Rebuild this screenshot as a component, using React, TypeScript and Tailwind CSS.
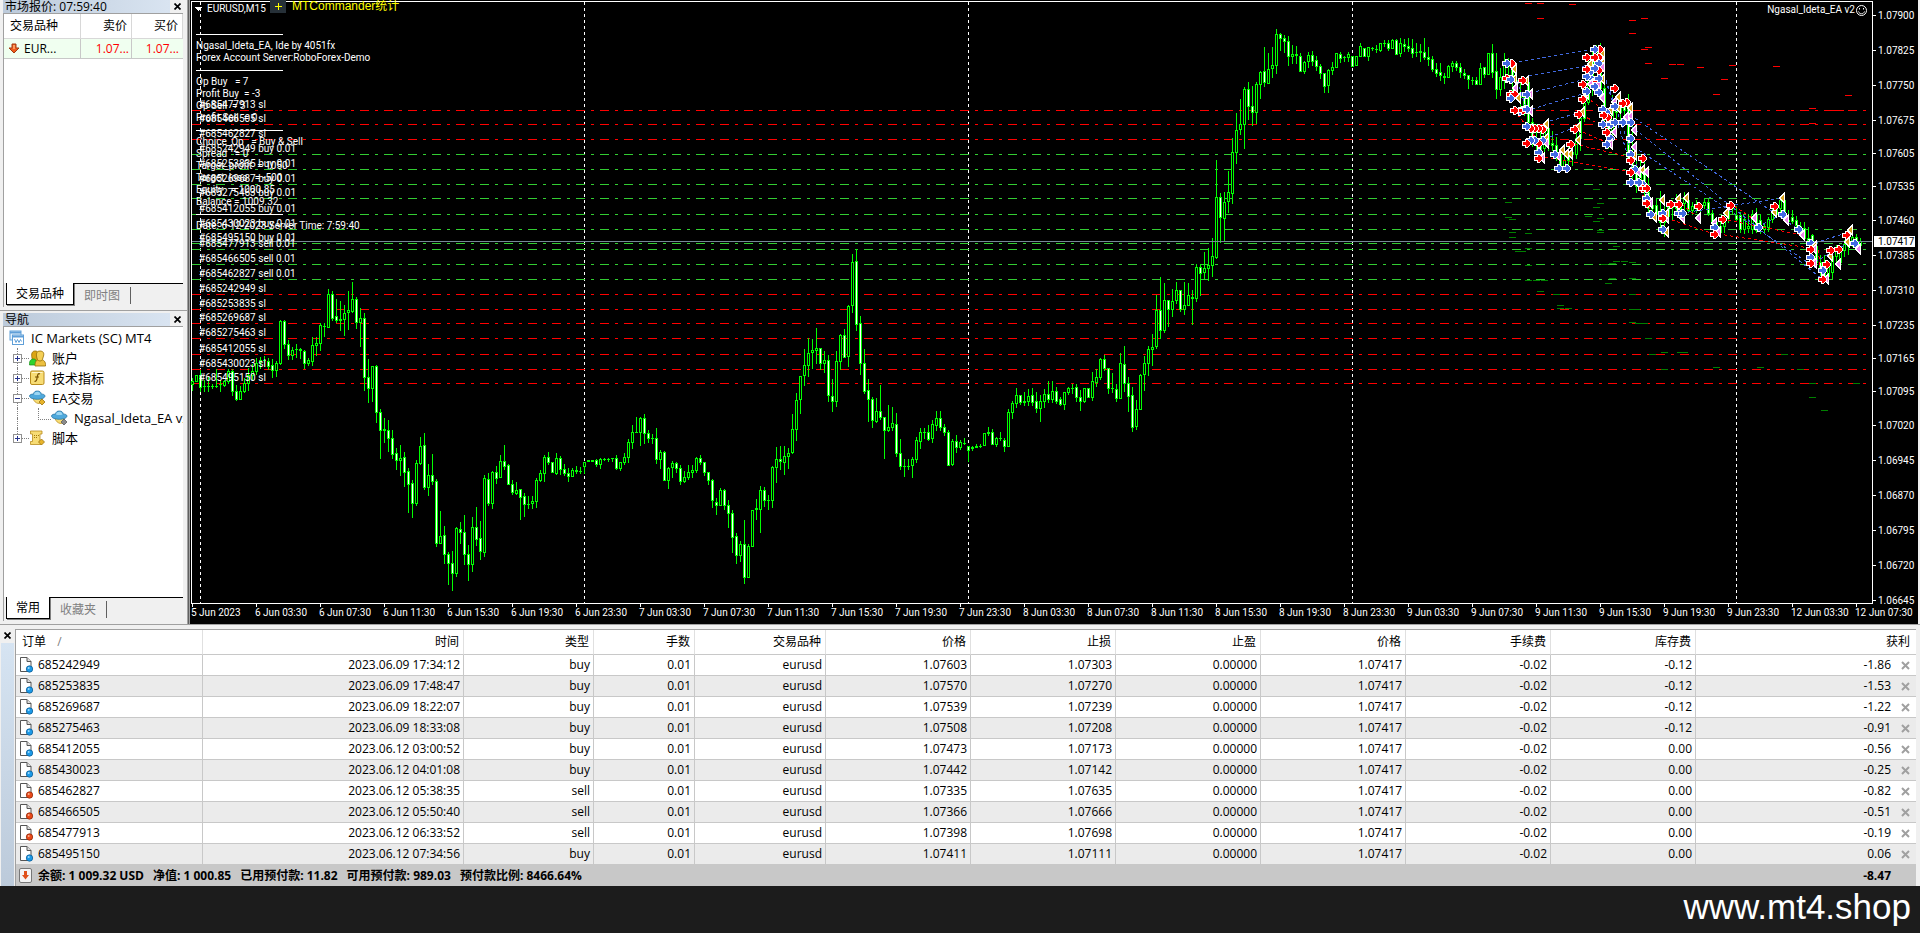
import type { ReactNode } from 'react';
import clsx from 'clsx';

// [open, high, low, close] as chart y positions, one candle every four pixels
type Candle = [number, number, number, number];

const CANDLES: Candle[] = [
  [384,378,390,381],[381,375,381,375],[375,370,391,387],[386,380,391,386],[386,377,391,386],[386,384,388,386],[386,369,387,386],[384,380,391,384],
  [385,380,386,381],[381,369,383,371],[371,369,395,391],[391,385,400,399],[399,386,399,391],[391,378,392,383],[383,368,390,375],[375,364,379,371],
  [371,358,374,363],[362,357,368,360],[360,356,366,360],[361,358,369,366],[365,359,377,370],[370,361,376,363],[363,320,364,321],[321,320,348,344],
  [344,340,359,355],[355,347,359,350],[349,344,357,349],[349,348,358,350],[351,350,368,363],[363,358,365,360],[361,337,365,345],[345,337,355,343],
  [343,323,350,325],[326,323,336,326],[327,289,327,294],[294,291,320,318],[316,299,322,320],[320,301,330,319],[319,305,335,313],[312,291,329,310],
  [311,282,312,299],[299,297,328,322],[322,308,346,318],[318,313,390,377],[377,359,402,388],[388,366,401,366],[366,365,422,412],[412,409,458,430],
  [429,418,442,430],[430,420,451,438],[438,430,458,454],[453,448,469,460],[460,445,475,458],[457,452,486,472],[471,468,512,484],[483,480,517,503],
  [503,460,505,463],[463,437,464,446],[445,433,489,487],[487,464,495,475],[475,454,484,481],[481,479,546,543],[543,511,543,536],[535,526,563,554],
  [554,552,584,563],[563,551,590,573],[573,527,576,528],[529,522,543,532],[532,515,564,554],[554,545,580,564],[564,517,571,527],[527,507,545,539],
  [538,521,559,551],[552,475,556,478],[479,473,505,503],[503,471,508,472],[472,466,483,478],[477,455,477,461],[461,445,469,466],[465,464,484,484],
  [484,480,494,492],[493,482,494,490],[489,489,519,497],[496,493,516,504],[504,496,508,504],[503,496,508,501],[501,478,507,480],[480,470,481,473],
  [473,455,481,457],[457,452,464,462],[462,462,472,472],[473,453,474,458],[458,456,474,469],[469,464,475,473],[473,468,481,476],[476,468,476,470],
  [471,466,473,470],[471,467,473,471],[466,462,473,462],[461,460,461,460],[460,460,461,461],[460,459,466,464],[464,458,468,459],[459,458,460,459],
  [459,458,461,459],[458,458,461,458],[458,455,469,468],[468,462,470,462],[462,453,464,457],[457,439,462,442],[442,425,448,432],[432,417,432,432],
  [432,417,445,418],[418,414,443,433],[433,430,442,438],[438,434,443,438],[438,428,463,459],[459,450,468,452],[452,451,480,480],[480,467,488,468],
  [467,461,477,463],[463,462,472,468],[468,465,484,481],[481,471,482,477],[477,465,479,472],[472,465,477,470],[470,457,472,458],[458,455,464,462],
  [462,462,475,472],[472,472,484,480],[480,479,507,500],[502,498,514,505],[505,488,505,490],[490,489,509,505],[505,500,527,513],[513,510,552,537],
  [536,533,563,555],[555,541,561,544],[544,520,583,577],[577,544,577,546],[546,510,546,510],[509,499,519,508],[509,486,532,490],[490,487,506,500],
  [500,495,509,500],[500,466,507,467],[467,447,482,459],[459,446,469,461],[462,446,474,456],[456,448,468,453],[452,414,453,429],[429,393,440,400],
  [399,376,413,376],[375,349,385,365],[365,338,376,353],[352,339,368,350],[350,328,363,348],[348,348,369,363],[363,351,372,360],[360,355,401,395],
  [396,379,411,401],[401,351,406,361],[361,334,369,335],[335,329,357,357],[356,305,366,306],[305,254,312,262],[261,249,330,324],[323,316,374,363],
  [363,349,393,391],[390,379,421,399],[399,397,427,420],[421,398,422,411],[411,385,419,417],[417,417,458,430],[430,405,431,427],[427,407,430,423],
  [424,413,456,453],[453,439,469,466],[466,459,476,466],[466,459,469,466],[465,457,477,459],[459,437,462,440],[441,428,448,432],[432,428,438,432],
  [432,425,440,439],[438,420,442,424],[425,411,430,418],[418,411,430,427],[427,424,435,432],[432,430,465,465],[464,439,465,441],[441,435,452,447],
  [447,440,449,442],[443,438,444,443],[446,446,461,450],[448,446,450,447],[447,444,447,446],[446,444,447,446],[445,433,445,433],[433,427,435,432],
  [432,429,444,444],[444,437,446,438],[438,432,440,438],[440,438,451,446],[446,409,446,412],[412,401,418,403],[403,388,407,395],[395,395,404,402],
  [402,392,405,401],[401,389,405,396],[395,388,405,402],[401,392,412,408],[408,395,421,401],[401,389,407,394],[394,381,402,399],[399,381,402,391],
  [391,387,403,401],[399,397,405,404],[404,392,409,392],[392,387,394,388],[388,384,393,388],[387,384,401,397],[397,390,410,401],[401,388,402,388],
  [388,388,397,397],[397,372,400,381],[382,369,386,377],[377,358,379,359],[359,355,370,368],[368,368,393,388],[388,373,392,388],[389,384,401,398],
  [398,353,398,363],[364,346,391,383],[383,377,411,396],[395,387,431,427],[426,400,429,409],[409,374,409,375],[374,356,390,363],[363,346,375,349],
  [349,334,365,347],[346,295,348,310],[310,277,338,330],[330,283,332,300],[300,300,326,309],[309,289,316,301],[300,282,303,290],[290,290,311,309],
  [309,282,314,305],[305,283,305,295],[297,290,324,298],[298,264,301,267],[267,264,295,273],[272,252,278,268],[268,248,280,265],[265,238,276,256],
  [257,160,258,197],[197,193,242,217],[218,192,241,202],[201,171,212,192],[193,138,203,152],[152,113,163,130],[129,99,134,124],[124,87,148,89],
  [89,82,119,106],[106,86,125,112],[112,82,123,84],[84,71,98,72],[71,47,86,82],[83,53,83,69],[68,47,77,65],[65,29,73,34],
  [34,33,50,38],[38,35,52,41],[41,36,65,56],[56,45,63,54],[54,46,63,55],[56,53,71,71],[71,61,73,62],[61,52,67,55],
  [55,51,65,61],[60,56,70,66],[66,64,78,73],[73,73,92,86],[85,69,92,70],[70,62,74,67],[67,53,67,53],[54,52,62,58],
  [57,56,61,57],[57,52,61,54],[56,56,66,66],[65,56,65,56],[56,43,56,46],[48,48,56,56],[56,47,60,47],[48,47,50,48],
  [49,45,52,49],[50,43,51,43],[43,40,46,43],[43,40,50,48],[48,39,48,40],[40,39,54,54],[53,38,56,43],[44,39,51,46],
  [46,38,51,48],[48,39,57,53],[52,43,56,52],[51,44,61,52],[52,38,59,57],[57,47,65,59],[59,56,71,69],[69,63,76,73],
  [72,63,80,75],[76,73,83,77],[77,65,77,66],[66,61,71,63],[63,61,70,67],[67,63,77,72],[73,69,78,75],[75,75,88,79],
  [80,77,84,80],[80,77,84,84],[84,63,84,68],[67,67,77,74],[74,53,74,53],[53,44,77,72],[71,53,98,89],[89,68,95,77],
  [77,53,88,64],[64,58,80,66],[66,60,95,80],[80,70,98,92],[92,83,108,97],[97,92,115,110],[82,78,126,122],[122,118,146,142],
  [142,124,150,140],[140,130,157,150],[148,122,158,128],[128,120,150,144],[143,131,150,145],[145,137,160,155],[155,150,171,166],[166,150,170,160],
  [160,145,170,152],[152,148,165,154],[154,130,158,138],[138,110,150,118],[118,98,121,103],[102,60,104,75],[75,50,95,56],[56,45,70,50],
  [50,43,95,88],[88,80,122,118],[118,110,148,130],[130,95,140,105],[105,98,120,112],[112,100,124,104],[104,100,120,110],[107,94,162,160],
  [160,118,178,166],[166,150,192,186],[186,160,190,168],[168,160,196,192],[192,178,212,208],[208,200,216,205],[205,198,218,214],[214,191,232,222],
  [222,200,236,216],[216,204,222,207],[207,200,219,203],[203,194,212,208],[208,200,210,203],[203,192,211,198],[200,195,212,210],[210,202,214,206],
  [206,200,212,208],[208,204,218,205],[205,198,208,202],[202,199,215,213],[213,210,225,222],[222,218,236,232],[232,222,234,226],[226,214,232,218],
  [218,206,222,208],[208,203,213,206],[215,206,221,219],[215,212,232,229],[229,216,233,219],[228,214,232,226],[229,210,233,214],[214,208,232,230],
  [220,214,233,229],[229,223,233,226],[227,217,231,219],[219,209,222,213],[213,205,215,208],[208,198,212,200],[200,196,218,216],[221,210,223,220],
  [217,210,223,221],[220,216,229,225],[226,222,235,230],[228,222,240,238],[238,227,242,240],[235,234,250,246],[246,240,266,262],[262,255,275,270],
  [270,255,282,276],[276,262,282,265],[272,250,278,256],[256,245,265,250],[262,250,267,252],[250,240,256,244],[246,236,254,240],[240,233,246,237],
  [237,234,246,243],[245,238,247,241],
];

type Level = { y: number; label: string; color: 'red' | 'limegreen' };

const LEVELS: Level[] = [
  { y: 110, label: '#685477913 sl', color: 'red' },
  { y: 124, label: '#685466505 sl', color: 'red' },
  { y: 139, label: '#685462827 sl', color: 'red' },
  { y: 154, label: '#685242949 buy 0.01', color: 'limegreen' },
  { y: 169, label: '#685253835 buy 0.01', color: 'limegreen' },
  { y: 184, label: '#685269687 buy 0.01', color: 'limegreen' },
  { y: 198, label: '#685275463 buy 0.01', color: 'limegreen' },
  { y: 214, label: '#685412055 buy 0.01', color: 'limegreen' },
  { y: 229, label: '#685430023 buy 0.01', color: 'limegreen' },
  { y: 243, label: '#685495150 buy 0.01', color: 'limegreen' },
  { y: 249, label: '#685477913 sell 0.01', color: 'limegreen' },
  { y: 264, label: '#685466505 sell 0.01', color: 'limegreen' },
  { y: 279, label: '#685462827 sell 0.01', color: 'limegreen' },
  { y: 294, label: '#685242949 sl', color: 'red' },
  { y: 309, label: '#685253835 sl', color: 'red' },
  { y: 323, label: '#685269687 sl', color: 'red' },
  { y: 338, label: '#685275463 sl', color: 'red' },
  { y: 354, label: '#685412055 sl', color: 'red' },
  { y: 369, label: '#685430023 sl', color: 'red' },
  { y: 383, label: '#685495150 sl', color: 'red' },
];

const PRICES: [number, string][] = [
  [15, '1.07900'], [50, '1.07825'], [85, '1.07750'], [120, '1.07675'], [153, '1.07605'], [186, '1.07535'],
  [220, '1.07460'], [255, '1.07385'], [290, '1.07310'], [325, '1.07235'], [358, '1.07165'], [391, '1.07095'],
  [425, '1.07020'], [460, '1.06945'], [495, '1.06870'], [530, '1.06795'], [565, '1.06720'], [600, '1.06645'],
];

const HOURS = ['03:30', '07:30', '11:30', '15:30', '19:30', '23:30'];
const TIMES = [
  '5 Jun 2023',
  ...[6, 7, 8, 9].flatMap((day) => HOURS.map((h) => `${day} Jun ${h}`)),
  '12 Jun 03:30',
  '12 Jun 07:30',
];

const DAY_BREAKS = [200, 584, 968, 1352, 1736];

// B / R = open arrows (buy / sell), G / V = close arrows
type Marker = ['B' | 'R' | 'G' | 'V', number, number];

const MARKERS: Marker[] = [
  ['G',1514,69],['R',1511,63],['B',1506,63],['G',1514,79],['R',1506,78],['B',1510,79],['V',1515,88],['R',1510,94],['R',1514,94],['G',1518,98],
  ['B',1510,98],['B',1519,111],['R',1514,110],['G',1526,81],['R',1522,80],['V',1530,94],['B',1526,94],['R',1522,110],['V',1530,111],['B',1526,109],
  ['G',1546,124],['R',1542,129],['R',1538,128],['R',1534,128],['R',1530,128],['B',1526,126],['G',1546,138],['V',1546,143],['B',1542,140],['R',1538,143],
  ['B',1534,140],['B',1530,140],['R',1526,143],['B',1538,152],['V',1542,158],['R',1538,158],['V',1558,156],['B',1554,154],['G',1562,150],['G',1570,154],
  ['G',1566,154],['B',1558,168],['B',1566,168],['R',1570,144],['G',1578,140],['G',1578,127],['R',1574,129],['G',1582,112],['R',1578,114],['G',1586,94],
  ['R',1582,99],['B',1586,91],['R',1582,84],['B',1590,78],['B',1586,76],['B',1590,71],['G',1590,64],['R',1586,69],['R',1586,57],['G',1602,53],
  ['R',1599,49],['B',1594,49],['R',1598,57],['R',1594,57],['G',1602,63],['V',1602,67],['B',1598,63],['R',1598,70],['B',1594,68],['G',1602,79],
  ['R',1594,82],['V',1590,84],['V',1598,84],['B',1598,78],['B',1594,86],['B',1598,92],['V',1602,98],['G',1618,97],['R',1614,88],['G',1610,110],
  ['V',1614,102],['G',1618,108],['B',1614,106],['B',1606,112],['B',1602,109],['R',1607,117],['R',1603,115],['G',1630,108],['R',1626,102],['R',1622,103],
  ['V',1630,116],['V',1626,117],['B',1622,122],['B',1630,122],['B',1610,124],['B',1602,124],['B',1614,122],['V',1634,130],['V',1614,132],['R',1606,132],
  ['B',1610,138],['V',1610,144],['B',1606,144],['B',1630,138],['V',1634,147],['G',1634,155],['B',1630,154],['R',1630,160],['R',1642,158],['V',1638,172],
  ['B',1634,169],['R',1630,172],['G',1642,170],['V',1646,172],['B',1630,182],['B',1642,184],['B',1638,182],['R',1642,188],['R',1646,188],['V',1650,203],
  ['B',1646,198],['R',1646,203],['G',1654,217],['B',1650,214],['G',1662,200],['V',1666,218],['G',1666,214],['B',1662,213],['R',1662,218],['G',1666,232],
  ['B',1662,229],['G',1678,199],['R',1670,204],['R',1678,204],['G',1686,198],['V',1682,218],['B',1678,213],['B',1682,213],['R',1698,206],['V',1698,218],
  ['V',1714,223],['B',1714,227],['V',1718,232],['R',1714,234],['G',1726,213],['R',1722,219],['R',1730,205],['V',1754,218],['B',1758,227],['G',1774,212],
  ['R',1774,206],['G',1782,198],['B',1782,214],['V',1786,220],['V',1802,235],['B',1798,229],['B',1810,243],['G',1814,246],['V',1814,249],['R',1810,249],
  ['B',1810,257],['V',1814,263],['R',1810,263],['V',1826,279],['R',1826,264],['B',1822,270],['R',1822,279],['G',1830,256],['R',1830,250],['R',1838,249],
  ['V',1838,264],['G',1850,230],['R',1846,235],['G',1847,242],['B',1854,243],['V',1858,249],
];

const MARKER_FILL = { B: '#4169e1', R: '#ff0000', G: '#daa520', V: '#ee82ee' };

const BUY_LINKS =
  'M1513 63L1594 49M1529 76L1590 65M1530 93L1582 80M1532 109L1582 94M1550 121L1578 113M1550 137L1578 126' +
  'M1604 75L1612 100M1606 80L1632 154M1618 125L1632 168M1630 115L1798 229M1626 122L1822 279M1634 147L1822 272' +
  'M1634 158L1648 198M1682 213L1782 198M1758 227L1782 214M1815 243L1846 233M1815 262L1854 240M1512 64L1526 108';
const SELL_LINKS =
  'M1586 97L1604 110M1582 115L1606 128M1578 130L1610 144M1574 144L1630 157M1545 157L1636 173M1666 218L1714 234' +
  'M1718 234L1810 248M1722 219L1802 235M1682 204L1698 218M1640 190L1654 216M1514 110L1540 143M1734 206L1758 222M1818 250L1822 279';

const STOP_MARKS: [number, number][] = [
  [1528,3],[1540,3],[1572,4],[1540,18],[1632,20],[1644,18],[1632,33],[1644,49],[1648,47],[1648,63],[1672,64],[1680,64],[1700,67],[1664,78],
  [1732,65],[1724,79],[1716,94],[1776,66],[1848,95],[1812,108],[1812,123],[1834,110],[1840,110],
];
const TAKE_MARKS: [number, number][] = [
  [1596,189],[1508,202],[1600,203],[1596,207],[1508,217],[1512,219],[1588,216],[1600,218],[1596,221],[1512,232],[1528,233],[1600,230],[1600,232],
  [1512,237],[1528,248],[1616,246],[1518,251],[1522,251],[1616,261],[1624,261],[1612,263],[1632,262],[1604,264],[1528,265],[1612,278],[1632,278],
  [1528,280],[1536,280],[1544,280],[1608,283],[1540,291],[1556,294],[1632,294],[1560,305],[1560,308],[1568,308],[1632,309],[1636,309],[1632,322],
  [1638,323],[1644,323],[1648,338],[1664,352],[1680,352],[1684,352],[1652,354],[1664,369],[1716,367],[1760,367],[1784,354],[1800,369],[1812,383],
  [1812,397],[1824,410],[1856,383],
];

const COMMENT = `Ngasal_Ideta_EA, Ide by 4051fx
Forex Account Server:RoboForex-Demo
---
Op Buy   = 7
Profit Buy  = -3
Op Sell  = 3
Profit Sell  = 0
---
Choice_Op   = Buy & Sell
Spread   = 0
Target_profit  = 1050
Target_loss   = -500
Equity   = 1000.85
Balance = 1009.32
---
Date: 6-12-2023 Server Time: 7:59:40`;

const COLUMNS = [
  { title: '时间', width: 'w-[261px]' },
  { title: '类型', width: 'w-[130px]' },
  { title: '手数', width: 'w-[101px]' },
  { title: '交易品种', width: 'w-[131px]' },
  { title: '价格', width: 'w-[145px]' },
  { title: '止损', width: 'w-[145px]' },
  { title: '止盈', width: 'w-[145px]' },
  { title: '价格', width: 'w-[145px]' },
  { title: '手续费', width: 'w-[145px]' },
  { title: '库存费', width: 'w-[145px]' },
];

const ORDERS = [
  ['685242949', '2023.06.09 17:34:12', 'buy', '1.07603', '1.07303', '-0.12', '-1.86'],
  ['685253835', '2023.06.09 17:48:47', 'buy', '1.07570', '1.07270', '-0.12', '-1.53'],
  ['685269687', '2023.06.09 18:22:07', 'buy', '1.07539', '1.07239', '-0.12', '-1.22'],
  ['685275463', '2023.06.09 18:33:08', 'buy', '1.07508', '1.07208', '-0.12', '-0.91'],
  ['685412055', '2023.06.12 03:00:52', 'buy', '1.07473', '1.07173', '0.00', '-0.56'],
  ['685430023', '2023.06.12 04:01:08', 'buy', '1.07442', '1.07142', '0.00', '-0.25'],
  ['685462827', '2023.06.12 05:38:35', 'sell', '1.07335', '1.07635', '0.00', '-0.82'],
  ['685466505', '2023.06.12 05:50:40', 'sell', '1.07366', '1.07666', '0.00', '-0.51'],
  ['685477913', '2023.06.12 06:33:52', 'sell', '1.07398', '1.07698', '0.00', '-0.19'],
  ['685495150', '2023.06.12 07:34:56', 'buy', '1.07411', '1.07111', '0.00', '0.06'],
];

function CloseButton({ label }: { label: string }) {
  return (
    <button type="button" aria-label={label} className="flex size-3 shrink-0 items-center justify-center">
      <svg width="7" height="7" viewBox="0 0 7 7" stroke="#000" strokeWidth="1.7">
        <path d="M.5 .5L6.5 6.5M6.5 .5L.5 6.5" />
      </svg>
    </button>
  );
}

function DownArrow() {
  return (
    <svg width="12" height="11" viewBox="0 0 12 11" className="shrink-0">
      <path d="M4 1h4v4h3L6 10 1 5h3z" fill="#ee5a1c" stroke="#a33a10" strokeWidth="1" />
      <path d="M5 2h2v4H5z" fill="#ff9a5c" />
    </svg>
  );
}

function TerminalIcon() {
  return (
    <svg width="16" height="16" viewBox="0 0 16 16" className="shrink-0">
      <rect x="1" y="1" width="11" height="9" fill="#e8f3fc" stroke="#5f9fd8" />
      <path d="M1 2.500h11" stroke="#5f9fd8" strokeWidth="2" />
      <rect x="3.500" y="5" width="11" height="9.500" fill="#fff" stroke="#5f9fd8" />
      <path d="M3.500 6.500h11" stroke="#5f9fd8" strokeWidth="2" />
      <path d="M5.500 9l1.500 3.500 1.500-3 1.500 3 1.500-3 1 2" fill="none" stroke="#5f9fd8" />
    </svg>
  );
}

function AccountsIcon() {
  return (
    <svg width="17" height="17" viewBox="0 0 17 17" className="shrink-0">
      <path d="M3 8C2 4 3 1 6 1s3 2 3 5l-1 6H4z" fill="#dba514" stroke="#946c06" strokeWidth=".8" />
      <path d="M.5 15C0 11 2 9 4.500 9S8 11 7 15z" fill="#2fd32f" stroke="#168a16" strokeWidth=".7" />
      <path d="M6 16c0-4 1-6.500 5-6.500s6 2.500 5.500 6.500z" fill="#ecc040" stroke="#946c06" strokeWidth=".8" />
      <path d="M7.500 6C7 3 8 1 11 1s4.500 2 3.500 5-1 5-3.500 5-3-2-3.500-5z" fill="#f4cf55" stroke="#946c06" strokeWidth=".8" />
    </svg>
  );
}

function IndicatorIcon() {
  return (
    <svg width="17" height="16" viewBox="0 0 17 16" className="shrink-0">
      <rect x="1.500" y="1" width="13.500" height="13.500" rx="1.500" fill="#f7dc74" stroke="#b98c1c" />
      <path d="M3 2.500h10.500" stroke="#fff6cc" />
      <path d="M11 4C9 3 8.500 5 8.200 7s-.6 5-2.700 4.300M6 7h4" fill="none" stroke="#7a5200" strokeWidth="1.200" />
    </svg>
  );
}

function ExpertIcon({ muted = false }: { muted?: boolean }) {
  return (
    <svg width="17" height="16" viewBox="0 0 17 16" className="shrink-0">
      <path d="M4 8c.5 3 3 5.500 6 5.500 2 0 3-2 3-5.500z" fill="#f7dc74" stroke="#b98c1c" strokeWidth=".7" />
      <path d="M.5 6C.5 4.500 3 4 4.500 4 5 1.500 6.500 1 8.500 1s3.300.8 3.800 3c1.700 0 3.700.7 3.700 2 0 2-3.500 3.300-7.700 3.300S.5 8 .5 6z" fill="#4fa9dc" stroke="#1f6f9f" strokeWidth=".7" />
      <path d="M5 4.500c.3-2 1.500-2.800 3.200-2.800s3 .8 3.300 2.800c-2 .8-4.500.8-6.500 0z" fill="#9bd6f3" />
      <path d="M13 9l3 3-3 3-3-3z" fill={muted ? '#8b8b8b' : '#e8b42a'} stroke={muted ? '#5c5c5c' : '#9c7410'} strokeWidth=".8" />
    </svg>
  );
}

function ScriptIcon() {
  return (
    <svg width="17" height="16" viewBox="0 0 17 16" className="shrink-0">
      <path d="M1.500 1h11.500v3h-2v8h1.500v2.500h-11V11.500H3.500V4h-2z" fill="#f7dc74" stroke="#b98c1c" strokeWidth=".8" />
      <path d="M5 5.500h1M7 5.500h1M9 5.500h1M5 7.500h1M7 7.500h1" stroke="#a37a0c" />
      <path d="M12.500 9l3 3-3 3-3-3z" fill="#e8b42a" stroke="#9c7410" strokeWidth=".8" />
    </svg>
  );
}

function OrderIcon({ side }: { side: string }) {
  const buy = side === 'buy';
  return (
    <svg width="15" height="16" viewBox="0 0 15 16" className="shrink-0">
      <path d="M1.500 .5H8L12 4.500V14.500H1.500z" fill="#fff" stroke="#555" />
      <path d="M8 .5V4.500H12" fill="#ddd" stroke="#555" />
      <circle cx="10.500" cy="12" r="3.200" fill={buy ? '#1c9ae8' : '#ea4a1a'} stroke={buy ? '#0d5e97' : '#92290a'} strokeWidth=".8" />
      <circle cx="9.700" cy="11" r="1" fill={buy ? '#9edbff' : '#ffb08f'} />
    </svg>
  );
}

function DockTitle({ children, close }: { children: ReactNode; close: string }) {
  return (
    <div className="flex h-[13px] items-center justify-between">
      <div className="flex h-full w-[167px] items-center bg-linear-to-r from-[#bccada] to-[#d9e4f1] pl-0.5 text-[12px] leading-3">
        {children}
      </div>
      <CloseButton label={close} />
    </div>
  );
}

function DockTabs({ active, other }: { active: string; other: string }) {
  return (
    <div className="flex h-6 bg-[#f0f0f0] pl-0.5 text-[12px] leading-4">
      <button type="button" className="h-[22px] border-x border-b border-black bg-white px-[9px] shadow-[1px_1px_0_#808080]">
        {active}
      </button>
      <div className="flex flex-1 border-t border-black">
        <button type="button" className="my-[3px] border-r border-[#606060] px-[10px] text-[#808080]">
          {other}
        </button>
      </div>
    </div>
  );
}

function MarketWatch() {
  return (
    <section className="flex h-[311px] flex-col border-b border-[#a0a0a0] pb-[3px] pl-[3px] pr-1">
      <DockTitle close="关闭市场报价">市场报价: 07:59:40</DockTitle>
      <div className="flex min-h-0 flex-1 flex-col border-l border-t border-[#a0a0a0] bg-white">
        <table className="w-full table-fixed border-separate border-spacing-0 text-[12px] leading-4">
          <thead>
            <tr className="h-[25px]">
              <th className="w-[77px] border-b border-r border-[#d8d8d8] pl-1.5 text-left font-normal">交易品种</th>
              <th className="w-[51px] border-b border-r border-[#d8d8d8] pr-1 text-right font-normal">卖价</th>
              <th className="border-b border-r border-[#d8d8d8] pr-1 text-right font-normal">买价</th>
            </tr>
          </thead>
          <tbody>
            <tr className="h-5 bg-[#f0fff0]">
              <td className="border-b border-r border-[#c8c8c8] pl-1">
                <span className="flex items-center gap-1"><DownArrow />EUR...</span>
              </td>
              <td className="border-b border-r border-[#c8c8c8] pr-0.5 text-right text-[#ff0000]">1.07...</td>
              <td className="border-b border-[#c8c8c8] pr-1 text-right text-[#ff0000]">1.07...</td>
            </tr>
          </tbody>
        </table>
        <div className="flex-1" />
        <DockTabs active="交易品种" other="即时图" />
      </div>
    </section>
  );
}

type TreeRowProps = { toggle?: '+' | '-'; last?: boolean; icon: ReactNode; children: ReactNode };

function TreeRow({ toggle, last, icon, children }: TreeRowProps) {
  return (
    <li className="flex h-5 items-center whitespace-nowrap pl-[9px]">
      <span className="flex h-full w-[9px] shrink-0 flex-col items-center">
        <span className="flex-1 border-l border-dotted border-[#808080]" />
        {toggle && (
          <button type="button" aria-label={toggle === '+' ? '展开' : '折叠'} className="size-[9px] border border-[#919191] bg-white">
            <svg width="7" height="7" viewBox="0 0 7 7" stroke="#26348c" shapeRendering="crispEdges">
              <path d={toggle === '+' ? 'M1 3.500h5M3.500 1v5' : 'M1 3.500h5'} />
            </svg>
          </button>
        )}
        <span className={clsx('flex-1', !last && 'border-l border-dotted border-[#808080]')} />
      </span>
      {toggle ? (
        <span className="w-[7px] shrink-0 border-t border-dotted border-[#808080]" />
      ) : (
        <span className="mb-2 ml-4 h-3 w-[13px] shrink-0 border-b border-l border-dotted border-[#808080]" />
      )}
      {icon}
      <span className="pl-1.5">{children}</span>
    </li>
  );
}

function Navigator() {
  return (
    <section className="flex h-[313px] flex-col pb-[3px] pl-[3px] pr-1 pt-0.5">
      <DockTitle close="关闭导航">导航</DockTitle>
      <div className="flex min-h-0 flex-1 flex-col border-l border-t border-[#a0a0a0] bg-white">
        <ul className="flex-1 overflow-hidden pt-px text-[13px] leading-5">
          <li className="flex h-5 items-center gap-1.5 pl-[5px]"><TerminalIcon />IC Markets (SC) MT4</li>
          <TreeRow toggle="+" icon={<AccountsIcon />}>账户</TreeRow>
          <TreeRow toggle="+" icon={<IndicatorIcon />}>技术指标</TreeRow>
          <TreeRow toggle="-" icon={<ExpertIcon />}>EA交易</TreeRow>
          <TreeRow icon={<ExpertIcon muted />}>Ngasal_Ideta_EA v2</TreeRow>
          <TreeRow toggle="+" last icon={<ScriptIcon />}>脚本</TreeRow>
        </ul>
        <DockTabs active="常用" other="收藏夹" />
      </div>
    </section>
  );
}

function CandleShape({ x, candle }: { x: number; candle: Candle }) {
  const [open, high, low, close] = candle;
  const top = Math.min(open, close);
  const size = Math.abs(open - close);
  return (
    <>
      <rect x={x} y={high} width="1" height={low - high + 1} fill="#00ff00" />
      <rect x={x - 1} y={top} width="3" height={size + 1} fill="#00ff00" />
      {size > 1 && <rect x={x} y={top + 1} width="1" height={size - 1} fill={close > open ? '#fff' : '#000'} />}
    </>
  );
}

function MarkerShape({ marker: [kind, x, y] }: { marker: Marker }) {
  const d = kind === 'B' || kind === 'R'
    ? `M${x - 3} ${y - 1}h3v-2h1l3 3v1l-3 3h-1v-2h-3z`
    : `M${x - 2} ${y}l4-4v8z`;
  return <path d={d} fill={MARKER_FILL[kind]} stroke="#fff" strokeWidth="2" paintOrder="stroke" />;
}

function Chart() {
  return (
    <section className="relative min-w-0 flex-1 overflow-hidden bg-black font-['Roboto',sans-serif] text-[10px] leading-3 text-white">
      <svg viewBox="190 0 1728 624" className="block h-[624px] w-full" fill="currentColor" shapeRendering="crispEdges">
        <g stroke="#fff">
          <path d="M191 1.500H1872.500V603.500M191.500 1V603.500H1872.500" fill="none" />
          {DAY_BREAKS.map((x) => (
            <path key={x} d={`M${x + 0.5} 2V603`} strokeDasharray="3 3" />
          ))}
          {TIMES.map((t, i) => (
            <path key={t} d={`M${192.5 + i * 64} 604v3`} />
          ))}
          {PRICES.map(([y]) => (
            <path key={y} d={`M1873 ${y + 0.5}h3`} />
          ))}
        </g>
        {LEVELS.map(({ y, color }) => (
          <path key={y} d={`M192 ${y + 0.5}H1866`} stroke={color} strokeDasharray="9 6 3 6" />
        ))}
        {CANDLES.map((candle, i) => (
          <CandleShape key={i} x={192 + i * 4} candle={candle} />
        ))}
        <path d="M192 241.500H1872" stroke="#778899" />
        {STOP_MARKS.map(([x, y]) => (
          <rect key={`${x}-${y}`} x={x - 3} y={y} width="7" height="1" fill="red" />
        ))}
        {TAKE_MARKS.map(([x, y]) => (
          <rect key={`${x}-${y}`} x={x - 3} y={y} width="7" height="1" fill="green" />
        ))}
        <path d={BUY_LINKS} stroke="#4169e1" strokeDasharray="3 3" fill="none" />
        <path d={SELL_LINKS} stroke="red" strokeDasharray="3 3" fill="none" />
        {MARKERS.map((m) => (
          <MarkerShape key={m.join()} marker={m} />
        ))}
        {LEVELS.map(({ y, label }) => (
          <text key={y} x="199" y={y - 2}>{label}</text>
        ))}
        {PRICES.map(([y, label]) => (
          <text key={y} x="1878" y={y + 4}>{label}</text>
        ))}
        <rect x="1874" y="236" width="41" height="11" fill="#fff" />
        <text x="1878" y="245" fill="#000">1.07417</text>
        {TIMES.map((t, i) => (
          <text key={t} x={191 + i * 64} y="616">{t}</text>
        ))}
        <path d="M195 7h7l-3.500 4z" />
        <g fill="none" stroke="#fff" shapeRendering="auto">
          <circle cx="1861.500" cy="10.500" r="5" />
          <path d="M1858.500 11.500c1 3 5 3 6 0M1859.500 8v1.500M1863.500 8v1.500" />
        </g>
      </svg>
      <div className="absolute left-[17px] top-0 flex items-start">
        <span className="w-[60px] pt-[3px]">EURUSD,M15</span>
        <button type="button" aria-label="添加" className="ml-[3px] flex h-[13px] w-4 items-center justify-center bg-[#263038]">
          <svg width="7" height="7" viewBox="0 0 7 7" stroke="#ff0" shapeRendering="crispEdges"><path d="M0 3.500h7M3.500 0v7" /></svg>
        </button>
        <span className="ml-1.5 font-['Liberation_Sans','Noto_Sans_CJK_SC',sans-serif] text-[12px] text-[#ff0]">MTCommander统计</span>
      </div>
      <span className="absolute right-[63px] top-1">Ngasal_Ideta_EA v2</span>
      <div className="absolute left-1.5 top-7 whitespace-pre">
        <div className="flex h-3 items-center"><span className="w-[87px] border-t border-white" /></div>
        {COMMENT.split('\n').map((line, i) =>
          line === '---' ? (
            <div key={i} className="flex h-3 items-center"><span className="w-[87px] border-t border-white" /></div>
          ) : (
            <div key={i} className="h-3">{line}</div>
          )
        )}
      </div>
    </section>
  );
}

function Terminal() {
  const cell = 'border-b border-r border-[#c8c8c8] pr-[3px] text-right';
  return (
    <section className="flex pt-1">
      <div className="flex w-[15px] shrink-0 flex-col items-center gap-0.5">
        <CloseButton label="关闭终端" />
        <div className="w-[13px] flex-1 bg-linear-to-b from-[#d6e4f2] to-[#bccada]" />
      </div>
      <div className="min-w-0 flex-1 border-l border-t border-[#a0a0a0] bg-white">
        <table className="w-full table-fixed border-separate border-spacing-0 text-[12px] leading-4">
          <thead>
            <tr className="h-[25px]">
              <th className="w-[187px] border-b border-b-[#c8c8c8] border-r border-r-[#e0e0e0] pl-1.5 text-left font-normal">
                订单 <span className="pl-2 text-[#808080]">/</span>
              </th>
              {COLUMNS.map((c, i) => (
                <th key={i} className={clsx(c.width, 'border-b border-b-[#c8c8c8] border-r border-r-[#e0e0e0] pr-1 text-right font-normal')}>
                  {c.title}
                </th>
              ))}
              <th className="border-b border-[#c8c8c8] pr-1.5 text-right font-normal">获利</th>
            </tr>
          </thead>
          <tbody>
            {ORDERS.map(([id, time, side, price, sl, swap, profit]) => (
              <tr key={id} className="h-[21px] even:bg-[#ebebeb]">
                <td className="border-b border-r border-[#c8c8c8] pl-[3px]">
                  <span className="flex items-center gap-1"><OrderIcon side={side} />{id}</span>
                </td>
                <td className={cell}>{time}</td>
                <td className={cell}>{side}</td>
                <td className={cell}>0.01</td>
                <td className={cell}>eurusd</td>
                <td className={cell}>{price}</td>
                <td className={cell}>{sl}</td>
                <td className={cell}>0.00000</td>
                <td className={cell}>1.07417</td>
                <td className={cell}>-0.02</td>
                <td className={cell}>{swap}</td>
                <td className="border-b border-[#c8c8c8] pr-1.5">
                  <span className="flex items-center justify-end gap-[10px]">
                    {profit}
                    <button type="button" aria-label={`平仓 ${id}`}>
                      <svg width="9" height="9" viewBox="0 0 9 9" stroke="#a0a0a0" strokeWidth="2"><path d="M1 1l7 7M8 1L1 8" /></svg>
                    </button>
                  </span>
                </td>
              </tr>
            ))}
          </tbody>
          <tfoot>
            <tr className="h-[21px] bg-[#c8c8c8] font-bold">
              <td colSpan={11} className="pl-[3px]">
                <div className="flex items-center gap-1.5">
                  <span className="flex h-[15px] w-[13px] items-center justify-center rounded-xs border border-[#777] bg-[#f4f4f4]">
                    <svg width="7" height="9" viewBox="0 0 7 9"><path d="M2 0h3v4h2L3.500 8.500 0 4h2z" fill="#e0501a" /></svg>
                  </span>
                  <span className="flex gap-[9px]">
                    <span>余额: 1 009.32 USD</span>
                    <span>净值: 1 000.85</span>
                    <span>已用预付款: 11.82</span>
                    <span>可用预付款: 989.03</span>
                    <span>预付款比例: 8466.64%</span>
                  </span>
                </div>
              </td>
              <td className="pr-[25px] text-right">-8.47</td>
            </tr>
          </tfoot>
        </table>
      </div>
      <div className="w-1 shrink-0" />
    </section>
  );
}

export default function App() {
  return (
    <div className="flex min-h-screen flex-col bg-[#f0f0f0] font-['Open_Sans','Noto_Sans_CJK_SC',sans-serif] text-black">
      <div className="flex h-[625px] border-b border-[#a0a0a0]">
        <aside className="w-[187px] shrink-0">
          <MarketWatch />
          <Navigator />
        </aside>
        <div className="w-[3px] shrink-0 border-x border-[#a0a0a0] bg-[#606060]" />
        <Chart />
        <div className="w-0.5 shrink-0" />
      </div>
      <Terminal />
      <footer className="flex flex-1 items-start justify-end bg-[#1c1c1c] pr-[9px] font-['Liberation_Sans',sans-serif] text-[35px] leading-[42px] text-white">
        www.mt4.shop
      </footer>
    </div>
  );
}
